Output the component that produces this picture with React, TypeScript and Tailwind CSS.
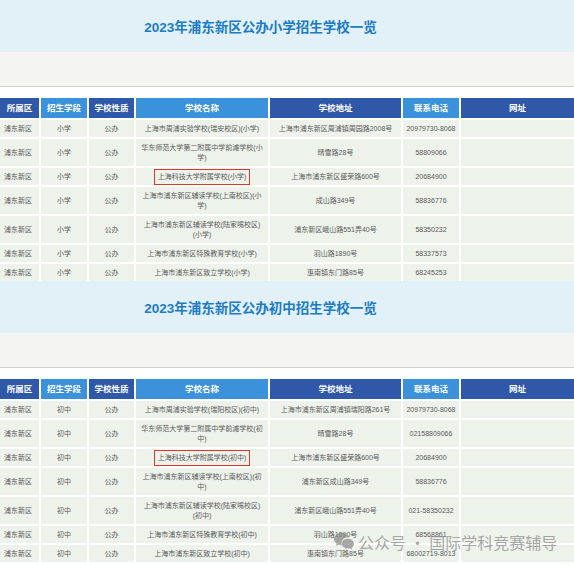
type Row = { name: string; addr: string; tel: string; boxed?: boolean };

const PRIMARY: Row[] = [
  { name: "上海市周浦实验学校(瑞安校区)(小学)", addr: "上海市浦东新区周浦镇周园路2008号", tel: "20979730-8068" },
  { name: "华东师范大学第二附属中学前滩学校(小\n学)", addr: "晴雪路28号", tel: "58809066" },
  { name: "上海科技大学附属学校(小学)", addr: "上海市浦东新区盛荣路600号", tel: "20684900", boxed: true },
  { name: "上海市浦东新区辅读学校(上南校区)(小\n学)", addr: "成山路349号", tel: "58836776" },
  { name: "上海市浦东新区辅读学校(陆家嘴校区)\n(小学)", addr: "浦东新区峨山路551弄40号", tel: "58350232" },
  { name: "上海市浦东新区特殊教育学校(小学)", addr: "羽山路1890号", tel: "58337573" },
  { name: "上海市浦东新区致立学校(小学)", addr: "惠南镇东门路85号", tel: "68245253" },
];

const MIDDLE: Row[] = [
  { name: "上海市周浦实验学校(瑞阳校区)(初中)", addr: "上海市浦东新区周浦镇瑞阳路261号", tel: "20979730-8068" },
  { name: "华东师范大学第二附属中学前滩学校(初\n中)", addr: "晴雪路28号", tel: "02158809066" },
  { name: "上海科技大学附属学校(初中)", addr: "上海市浦东新区盛荣路600号", tel: "20684900", boxed: true },
  { name: "上海市浦东新区辅读学校(上南校区)(初\n中)", addr: "浦东新区成山路349号", tel: "58836776" },
  { name: "上海市浦东新区辅读学校(陆家嘴校区)\n(初中)", addr: "浦东新区峨山路551弄40号", tel: "021-58350232" },
  { name: "上海市浦东新区特殊教育学校(初中)", addr: "羽山路1890号", tel: "68568861" },
  { name: "上海市浦东新区致立学校(初中)", addr: "惠南镇东门路85号", tel: "68002719-8013" },
];

const HEADERS = ["所属区", "招生学段", "学校性质", "学校名称", "学校地址", "联系电话", "网址"];

function Section({ title, level, rows }: { title: string; level: string; rows: Row[] }) {
  return (
    <section>
      <div className="flex h-[52px] items-center justify-center bg-[#e2f0f8] pr-[53px] pt-[5px]">
        <h2 className="text-[13.5px] font-bold text-[#1b7cc4]">{title}</h2>
      </div>
      <div className="h-[35px] border-b border-[#d2d2d2] bg-[#f4f4f2]" />
      <div className="grid grid-cols-[39px_46px_45px_132px_131px_56px_1fr] gap-[2px] bg-white pt-[11px] text-[7px] leading-[10px] text-[#5a5a5a]">
        {HEADERS.map((h, i) => (
          <div
            key={h}
            className={`flex h-[20px] items-center justify-center text-[8.5px] font-bold text-white ${
              i % 2 === 0 ? "bg-[#3058a8]" : "bg-[#3c92da]"
            }`}
          >
            {h}
          </div>
        ))}
        {rows.map((r) => {
          const tall = r.name.includes("\n");
          const h = tall ? "h-[27px]" : "h-[17px]";
          const cell = `flex ${h} items-center justify-center bg-[#edf2eb] text-center`;
          return (
            <div key={r.name} className="contents">
              <div className={`${cell} justify-start pl-[4px]`}>浦东新区</div>
              <div className={cell}>{level}</div>
              <div className={cell}>公办</div>
              <div className={`${cell} whitespace-pre-line`}>
                {r.boxed ? (
                  <span className="border-[1.5px] border-[#e0362c] px-[3px] py-[2px]">{r.name}</span>
                ) : (
                  r.name
                )}
              </div>
              <div className={cell}>{r.addr}</div>
              <div className={cell}>{r.tel}</div>
              <div className={cell} />
            </div>
          );
        })}
      </div>
    </section>
  );
}

function WeChatIcon() {
  return (
    <svg width="22" height="20" viewBox="0 0 24 22" fill="currentColor">
      <path d="M9 1C4.6 1 1 4 1 7.7c0 2.1 1.2 4 3 5.2L3.3 15.5l2.9-1.6c.9.3 1.8.4 2.8.4h.6a5.9 5.9 0 0 1-.3-1.8c0-3.7 3.5-6.6 7.9-6.6h.4C16.8 3.2 13.3 1 9 1z" />
      <path d="M16.3 7.4c-3.7 0-6.6 2.4-6.6 5.4s2.9 5.4 6.6 5.4c.8 0 1.5-.1 2.2-.3l2.4 1.3-.6-2.1c1.6-1 2.6-2.6 2.6-4.3 0-3-3-5.4-6.6-5.4z" />
    </svg>
  );
}

export default function App() {
  return (
    <div className="relative h-[565px] w-[574px] overflow-hidden bg-white font-['Liberation_Sans','Noto_Sans_CJK_SC',sans-serif]">
      <Section title="2023年浦东新区公办小学招生学校一览" level="小学" rows={PRIMARY} />
      <Section title="2023年浦东新区公办初中招生学校一览" level="初中" rows={MIDDLE} />

      {/* watermark */}
      <div className="absolute left-[333px] top-[530px] flex items-center gap-[3px] text-[16px] text-[#8c8c8c]/75 font-['Noto_Sans_CJK_SC',sans-serif]">
        <WeChatIcon />
        <span>公众号 · 国际学科竞赛辅导</span>
      </div>
    </div>
  );
}
